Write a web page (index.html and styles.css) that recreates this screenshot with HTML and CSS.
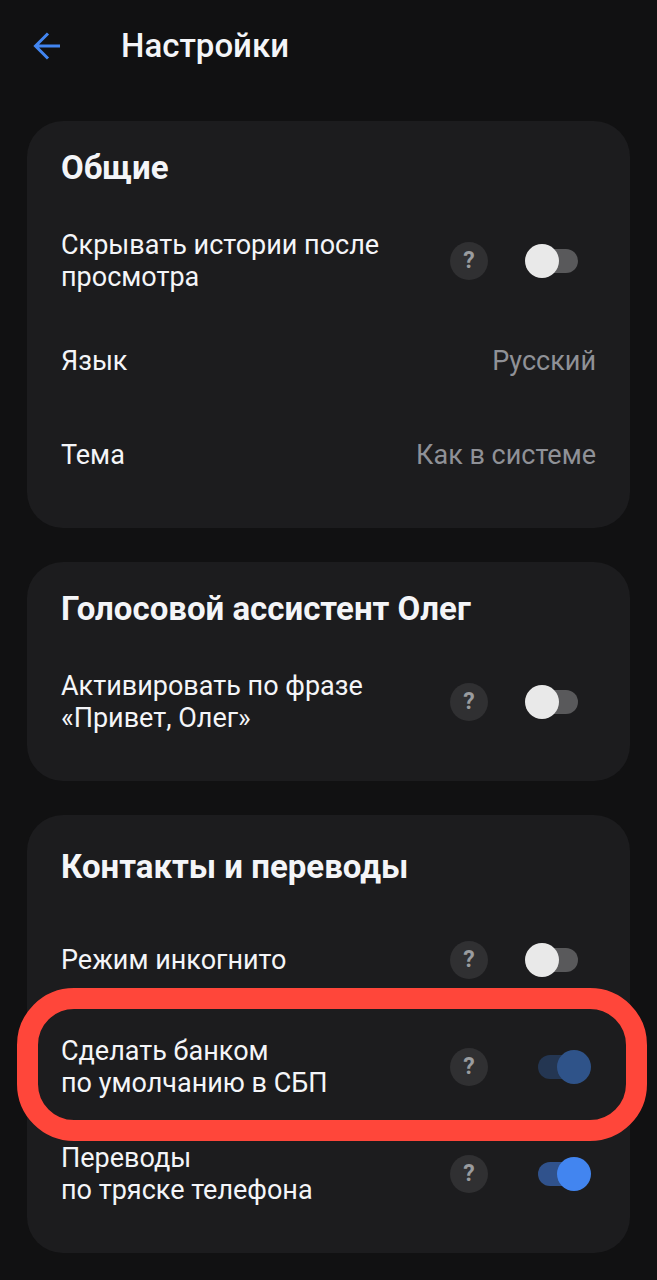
FILE: index.html
```html
<!DOCTYPE html>
<html lang="ru">
<head>
  <meta charset="UTF-8">
  <meta name="viewport" content="width=device-width, initial-scale=1.0">
  <title>Настройки</title>
  <link rel="stylesheet" href="styles.css">
</head>
<body>

<header class="header">
  <button class="back-button" type="button" aria-label="Назад">
    <svg width="28" height="28" viewBox="0 0 28 28" fill="none" stroke="currentColor" stroke-width="3">
      <path d="M27 14H3M15 1.500L2.500 14L15 26.500"/>
    </svg>
  </button>
  <h1 class="title">Настройки</h1>
</header>

<main class="container">
  <section class="card">
    <h2 class="card-title">Общие</h2>
    <div class="row row-toggle">
      <label class="label" for="stories">Скрывать истории после просмотра</label>
      <button class="help-button" type="button">?</button>
      <input class="toggle" type="checkbox" id="stories">
    </div>
    <div class="row">
      <span class="label">Язык</span>
      <span class="value">Русский</span>
    </div>
    <div class="row">
      <span class="label">Тема</span>
      <span class="value">Как в системе</span>
    </div>
  </section>

  <section class="card">
    <h2 class="card-title">Голосовой ассистент Олег</h2>
    <div class="row row-toggle">
      <label class="label" for="oleg">Активировать по фразе «Привет, Олег»</label>
      <button class="help-button" type="button">?</button>
      <input class="toggle" type="checkbox" id="oleg">
    </div>
  </section>

  <section class="card card-contacts">
    <h2 class="card-title">Контакты и переводы</h2>
    <div class="row row-toggle">
      <label class="label" for="incognito">Режим инкогнито</label>
      <button class="help-button" type="button">?</button>
      <input class="toggle" type="checkbox" id="incognito">
    </div>
    <div class="row row-toggle row-marked">
      <label class="label" for="sbp">Сделать банком<br>по умолчанию в СБП</label>
      <button class="help-button" type="button">?</button>
      <input class="toggle" type="checkbox" id="sbp" checked disabled>
    </div>
    <div class="row row-toggle">
      <label class="label" for="shake">Переводы<br>по тряске телефона</label>
      <button class="help-button" type="button">?</button>
      <input class="toggle" type="checkbox" id="shake" checked>
    </div>
  </section>
</main>

</body>
</html>
```
FILE: styles.css
```css
* {
  box-sizing: border-box;
}

body {
  --background-color: #111112;
  --card-color: #1c1c1e;
  --text-color: #f4f5f8;
  --muted-color: #8f9197;
  --accent-color: #4285f0;

  font-family: Roboto, Arial, sans-serif;
  font-size: 27px;
  line-height: 32px;
  background-color: var(--background-color);
  color: var(--text-color);
  margin: 0;
}

.header {
  display: flex;
  align-items: center;
  gap: 60px;
  height: 91px;
  padding: 0 33px;
}

.back-button {
  display: flex;
  padding: 0;
  border: none;
  background: none;
  color: var(--accent-color);
  cursor: pointer;
}

.title {
  margin: 0;
  font-size: 33px;
  font-weight: 500;
}

.container {
  display: flex;
  flex-direction: column;
  gap: 34px;
  padding: 30px 27px 26px;
}

.card {
  padding: 27px 34px 26px;
  border-radius: 36px;
  background: var(--card-color);
}

.card-contacts {
  padding-top: 32px;
}

.card-title {
  margin: 0 0 19px;
  font-size: 33px;
  line-height: 40px;
  font-weight: 700;
}

.row {
  position: relative;
  display: flex;
  align-items: center;
  justify-content: space-between;
  min-height: 94px;
}

.row-toggle {
  min-height: 107px;
  padding-right: 5px;
}

.row-toggle .label {
  flex: 1;
  padding-right: 60px;
}

.value {
  color: var(--muted-color);
}

.help-button {
  width: 38px;
  height: 38px;
  margin-right: 37px;
  padding: 0;
  border: none;
  border-radius: 50%;
  background: #303032;
  color: #9a9c9f;
  font: 700 23px Roboto, Arial, sans-serif;
  cursor: pointer;
}

.toggle {
  appearance: none;
  position: relative;
  width: 66px;
  height: 34px;
  margin: 0;
  cursor: pointer;
}

.toggle::before {
  content: '';
  position: absolute;
  top: 5px;
  left: 13px;
  width: 40px;
  height: 24px;
  border-radius: 12px;
  background: #59595b;
}

.toggle::after {
  content: '';
  position: absolute;
  top: 0;
  left: 0;
  width: 34px;
  height: 34px;
  border-radius: 50%;
  background: #e9e9e9;
}

.toggle:checked::before {
  background: #30528c;
}

.toggle:checked::after {
  left: 32px;
  background: var(--accent-color);
}

.toggle:disabled::before {
  background: #243652;
}

.toggle:disabled::after {
  background: #2f5389;
}

/* red frame around the row */
.row-marked::after {
  content: '';
  position: absolute;
  inset: -25px -51px -21px -44px;
  border: 21px solid #ff463a;
  border-radius: 57px;
  pointer-events: none;
}
```
